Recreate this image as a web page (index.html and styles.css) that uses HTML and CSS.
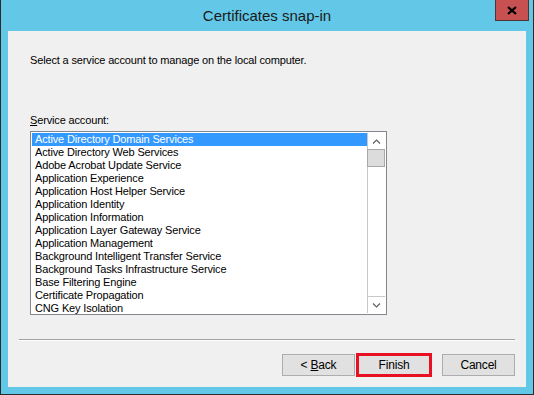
FILE: index.html
```html
<!DOCTYPE html>
<html lang="en">
<head>
<meta charset="utf-8">
<title>Certificates snap-in</title>
<link rel="stylesheet" href="styles.css">
</head>
<body>
  <div class="window">
    <div class="titlebar">
      <span class="title">Certificates snap-in</span>
      <button class="close-btn" title="Close">
        <svg viewBox="0 0 10 9" width="10" height="9">
          <path d="M1 1 L9 8 M9 1 L1 8" stroke="#000" stroke-width="2.2" fill="none"/>
        </svg>
      </button>
    </div>

    <div class="client">
      <p class="intro">Select a service account to manage on the local computer.</p>

      <label class="field-label"><u>S</u>ervice account:</label>
      <div class="listbox">
        <ul class="items">
          <li class="selected">Active Directory Domain Services</li>
          <li>Active Directory Web Services</li>
          <li>Adobe Acrobat Update Service</li>
          <li>Application Experience</li>
          <li>Application Host Helper Service</li>
          <li>Application Identity</li>
          <li>Application Information</li>
          <li>Application Layer Gateway Service</li>
          <li>Application Management</li>
          <li>Background Intelligent Transfer Service</li>
          <li>Background Tasks Infrastructure Service</li>
          <li>Base Filtering Engine</li>
          <li>Certificate Propagation</li>
          <li>CNG Key Isolation</li>
        </ul>
        <div class="scrollbar">
          <div class="arrow">
            <svg viewBox="0 0 9 5" width="9" height="5"><path d="M1 4.5 L4.5 1 L8 4.5" stroke="#606060" stroke-width="1.2" fill="none"/></svg>
          </div>
          <div class="thumb"></div>
          <div class="track"></div>
          <div class="arrow">
            <svg viewBox="0 0 9 5" width="9" height="5"><path d="M1 0.5 L4.5 4 L8 0.5" stroke="#606060" stroke-width="1.2" fill="none"/></svg>
          </div>
        </div>
      </div>

      <div class="separator"></div>

      <div class="buttons">
        <button class="btn">&lt; <u>B</u>ack</button>
        <div class="focus-ring"><button class="btn">Finish</button></div>
        <button class="btn">Cancel</button>
      </div>
    </div>
  </div>
</body>
</html>
```

FILE: styles.css
```css
body {
  margin: 0;
  font-family: "Liberation Sans", Arial, sans-serif;
  font-size: 11px;
  letter-spacing: -0.15px;
  color: #000;
}

.window {
  width: 532px;
  height: 394px;
  background: #63c8e8;
  border: 1px solid #2b2b2b;
  border-top: none;
  display: flex;
  flex-direction: column;
}

.titlebar {
  height: 31px;
  display: flex;
  align-items: center;
  justify-content: center;
  position: relative;
}

.title {
  font-size: 15px;
  letter-spacing: 0;
  color: #1a1a1a;
  margin-top: -1px;
}

.close-btn {
  position: absolute;
  top: 0;
  right: 4px;
  width: 34px;
  height: 21px;
  padding: 0;
  background: #c75050;
  border: 1px solid #4e3535;
  border-top: none;
  display: flex;
  align-items: center;
  justify-content: center;
}

.client {
  flex: 1;
  margin: 0 7px 7px 7px;
  background: #f0f0f0;
  display: flex;
  flex-direction: column;
}

.intro {
  margin: 22px 0 0 22px;
  line-height: 15px;
}

.field-label {
  margin: 45px 0 0 22px;
  line-height: 15px;
}

.listbox {
  margin: 3px 0 0 22px;
  width: 355px;
  height: 182px;
  border: 1px solid #828790;
  background: #fff;
  display: flex;
}

.items {
  list-style: none;
  margin: 1px 0 0 1px;
  padding: 0;
  flex: 1;
  overflow: hidden;
}

.items li {
  height: 13px;
  line-height: 13px;
  padding-left: 3px;
  white-space: nowrap;
}

.items li.selected {
  background: #3399ff;
  color: #fff;
}

.scrollbar {
  width: 17px;
  margin: 1px 1px 1px 0;
  display: flex;
  flex-direction: column;
  border-left: 1px solid #c8c8c8;
}

.arrow {
  height: 16px;
  display: flex;
  align-items: center;
  justify-content: center;
}

.thumb {
  height: 16px;
  background: #dcdcdc;
  border: 1px solid #a8a8a8;
  margin-left: -1px;
}

.track {
  flex: 1;
  border-bottom: 1px solid #c8c8c8;
}

.separator {
  margin: 24px 11px 0 11px;
  border-top: 1px solid #a0a0a0;
  border-bottom: 1px solid #fff;
}

.buttons {
  margin: 12px 11px 0 0;
  display: flex;
  justify-content: flex-end;
  align-items: center;
}

.btn {
  width: 73px;
  height: 22px;
  padding: 0;
  font-family: inherit;
  font-size: 12px;
  letter-spacing: -0.2px;
  color: #000;
  background: #e1e1e1;
  border: 1px solid #adadad;
}

.focus-ring {
  width: 70px;
  height: 18px;
  margin: 0 10px 0 1px;
  border: 3px solid #e81123;
  display: flex;
}

.focus-ring .btn {
  width: 70px;
  height: 18px;
  border: none;
}
```
